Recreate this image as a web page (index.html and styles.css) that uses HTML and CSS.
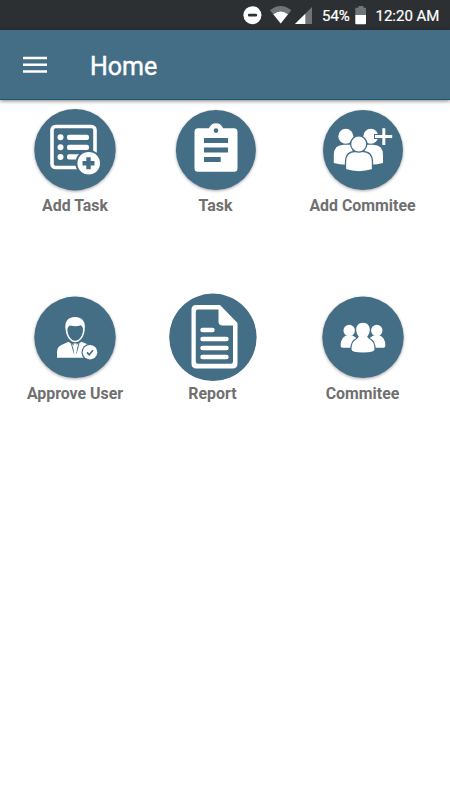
FILE: index.html
```
<!DOCTYPE html>
<html lang="en">
<head>
<meta charset="utf-8">
<title>Home</title>
<link rel="stylesheet" href="styles.css">
</head>
<body>
<div class="status">
  <svg class="status-icons" viewBox="240 0 76 30" width="76" height="30">
    <circle cx="252.4" cy="15.2" r="9" fill="#fff"/><rect x="248" y="13.7" width="9" height="2.9" rx="1" fill="#2c3033"/>
    <path d="M270 10.3Q280.700 1.500 291.300 10.300L280.700 23.500Z" fill="#707577"/>
    <path d="M273.300 14.300Q280.700 8.700 288 14.300L280.700 23.500Z" fill="#fff"/>
    <path d="M312 7V24H295Z" fill="#707577"/><path d="M305.300 13.700V24H295Z" fill="#fff"/>
  </svg>
  <span class="percent">54%</span>
  <svg class="battery" viewBox="355 0 12 30" width="12" height="30">
    <path d="M358.500 6h5v1.700h2.500V15H355.300V7.700h3.200z" fill="#707577"/><path d="M355.300 15H366v8.300q0 1-1 1h-8.700q-1 0-1-1z" fill="#fff"/>
  </svg>
  <span class="time">12:20 AM</span>
</div>
<header class="bar">
  <svg class="menu" viewBox="0 0 24 18" width="24" height="18"><path d="M0 2H24M0 8.700H24M0 15.500H24" stroke="#fff" stroke-width="2.500"/></svg>
  <h1 class="title">Home</h1>
</header>
<main>
  <section class="row row-first">
    <a class="tile">
      <svg class="icon" viewBox="31 106 88 88">
        <circle class="disc" cx="75" cy="149.700" r="40.700"/>
        <rect x="52" y="126.500" width="43" height="41" rx="3.500" fill="none" stroke="#fff" stroke-width="3.600"/>
        <g fill="#fff"><circle cx="60.500" cy="137.300" r="3"/><circle cx="60.500" cy="147.300" r="3"/><circle cx="60.500" cy="157" r="3"/>
        <rect x="67" y="134.700" width="22" height="5.300" rx="2"/><rect x="67" y="144.700" width="22" height="5.300" rx="2"/><rect x="67" y="154.300" width="16" height="5.300" rx="2"/></g>
        <circle cx="88.700" cy="163.200" r="13.300" fill="#446e86"/><circle cx="88.700" cy="163.200" r="11.300" fill="#fff"/>
        <path d="M88.500 157.300v12M82.500 163.300h12" stroke="#446e86" stroke-width="4.400"/>
      </svg>
      <span class="label">Add Task</span>
    </a>
    <a class="tile">
      <svg class="icon" viewBox="171.500 106 88 88">
        <circle class="disc" cx="215.400" cy="150" r="40"/>
        <path d="M197.500 128.300H208.500Q210.500 123.300 215.500 123.300T222.500 128.300H233.500Q237 128.300 237 131.800V168.300Q237 171.800 233.500 171.800H197.500Q194 171.800 194 168.300V131.800Q194 128.300 197.500 128.300Z" fill="#fff"/>
        <circle cx="215.500" cy="130.600" r="2.300" fill="#446e86"/>
        <path d="M203.500 140.500H227.500M203.500 150H227.500M203.500 159.500H220.200" stroke="#446e86" stroke-width="5"/>
      </svg>
      <span class="label">Task</span>
    </a>
    <a class="tile">
      <svg class="icon" viewBox="318.500 106 88 88">
        <circle class="disc" cx="362.500" cy="150" r="40"/>
        <g fill="#fff">
          <circle cx="345.300" cy="136.200" r="7.500"/><circle cx="370.300" cy="136.200" r="7.500"/>
          <path d="M333.300 163V155Q333.300 144.700 343.500 144.700H352V164.500Q341 165.500 333.300 163Z"/>
          <path d="M382.500 163V155Q382.500 144.700 372.500 144.700H364V164.500Q375 165.500 382.500 163Z"/>
        </g>
        <path d="M383.300 127.500V145.500M373.500 136.500H392.500" stroke="#446e86" stroke-width="5"/>
        <path d="M383.300 128.200V145M374.500 136.500H391.700" stroke="#fff" stroke-width="3"/>
        <path d="M345 169.700V162Q345 151.300 355.500 151.300H361.500Q372 151.300 372 162V169.700Q358.500 174 345 169.700Z" fill="#fff" stroke="#446e86" stroke-width="1.300"/>
        <circle cx="358.200" cy="144" r="8.100" fill="#fff" stroke="#446e86" stroke-width="1.300"/>
      </svg>
      <span class="label">Add Commitee</span>
    </a>
  </section>
  <section class="row row-second">
    <a class="tile">
      <svg class="icon" viewBox="31 293 88 88">
        <circle class="disc" cx="75" cy="337.300" r="40.700"/>
        <path d="M65.800 331C64 322 67.500 317 75 317S86.300 322 84.500 331C84 337 79.500 342.300 75.200 342.300S66.500 337 65.800 331Z" fill="#fff"/>
        <path d="M67.400 329.500C67.600 327.500 68.500 326.200 70 325.500C74 326.700 78 326.500 80.800 325.300C82.500 326.500 83 328 83 329.500C83 336 79 340.800 75.200 340.800S67.500 336 67.400 329.500Z" fill="#446e86"/>
        <path d="M57 357.700V352Q57 346.300 62.500 344.500L68.500 341.700L74.800 346L81.500 341.700L88 344.500Q93 346.300 93 352V357.700Z" fill="#fff"/>
        <path d="M71.300 343.300L74.200 353.500M79 343.300L76.200 353.500" fill="none" stroke="#446e86" stroke-width="1"/>
        <path d="M73.300 343.500H77L76 346L76.700 352L75.200 354.500L73.700 352L74.300 346Z" fill="#fff"/>
        <circle cx="90" cy="352.200" r="8.500" fill="#446e86"/><circle cx="90" cy="352.200" r="7.300" fill="#fff"/>
        <path d="M87 352.400L89.200 354.700L93 350.300" fill="none" stroke="#446e86" stroke-width="1.700"/>
      </svg>
      <span class="label">Approve User</span>
    </a>
    <a class="tile">
      <svg class="icon" viewBox="168.500 293 88 88">
        <circle class="disc-flat" cx="212.400" cy="337.300" r="43.700"/>
        <path d="M195.500 305H219.500L237 323V363.500Q237 368.500 232 368.500H196Q191 368.500 191 363.500V309.500Q191 305 195.500 305Z" fill="#fff"/>
        <path d="M197.500 309.500H218V321.500Q218 325.500 222 325.500H232.500V361.500Q232.500 363.700 230.300 363.700H197.500Q195.300 363.700 195.300 361.500V311.700Q195.300 309.500 197.500 309.500Z" fill="#446e86"/>
        <path d="M202 330H212M202 339H226M202 348H226M202 357H226" stroke="#fff" stroke-width="4.400" stroke-linecap="round"/>
      </svg>
      <span class="label">Report</span>
    </a>
    <a class="tile">
      <svg class="icon" viewBox="318.500 293 88 88">
        <circle class="disc" cx="362.500" cy="337.300" r="40.700"/>
        <g fill="#fff">
          <circle cx="348.700" cy="330.500" r="5.700"/><circle cx="376.300" cy="330.500" r="5.700"/>
          <path d="M345.500 335.500H352L356 338V347.700H342.300Q339.800 347.700 340.200 344.500Q340.500 338 345.500 335.500Z"/>
          <path d="M379.500 335.500H373L369 338V347.700H382.700Q385.200 347.700 384.800 344.500Q384.500 338 379.500 335.500Z"/>
        </g>
        <path class="front" d="M362.500 322.700C366.700 322.700 369.300 325.500 369.300 329.500C369.300 333 368 335 366.700 336.500Q367 338.200 369.500 339.500Q374 341.500 374 349.500Q374 352.500 362.500 352.500T351 349.500Q351 341.500 355.500 339.500Q358 338.200 358.300 336.500C357 335 355.700 333 355.700 329.500C355.700 325.500 358.300 322.700 362.500 322.700Z"/>
      </svg>
      <span class="label">Commitee</span>
    </a>
  </section>
</main>
</body>
</html>
```
FILE: styles.css
```
* { box-sizing: border-box; }
body { margin: 0; height: 800px; background: #fff; font-family: Roboto, sans-serif; overflow: hidden; }
.status { display: flex; align-items: center; height: 30px; padding-left: 240px; background: #2c3033; color: #fff; font-size: 15px; line-height: 30px; white-space: nowrap; padding-top: 1px; }
.status svg { flex: none; margin-top: -1px; }
.percent { width: 33px; margin-left: 6px; -webkit-text-stroke: .2px #fff; }
.time { margin-left: 8.5px; -webkit-text-stroke: .2px #fff; }
.bar { display: flex; align-items: center; height: 70px; padding-left: 23px; background: #446e86; border-bottom: 1px solid #185873; box-shadow: 0 1px 4px rgba(0, 0, 0, .5); }
.menu { flex: none; }
.title { margin: 4px 0 0 43px; color: #fff; font-size: 25px; font-weight: 400; line-height: 30px; -webkit-text-stroke: .4px #fff; }
.row { display: grid; }
.row-first { grid-template-columns: 150px 131px 163px; padding-top: 6px; height: 193px; }
.row-second { grid-template-columns: 150px 125px 175px; }
.tile { display: flex; flex-direction: column; align-items: center; }
.icon { display: block; width: 88px; height: 88px; overflow: visible; }
.disc { fill: #446e86; filter: drop-shadow(0 1.5px 1.5px rgba(0, 0, 0, .35)); }
.disc-flat { fill: #446e86; }
.front { fill: #fff; stroke: #446e86; stroke-width: 2.4px; paint-order: stroke; }
.label { margin-top: 2px; color: #707070; font-size: 15.9px; font-weight: 700; line-height: 20px; white-space: nowrap; }
.row-second .label { margin-top: 3px; }
```
